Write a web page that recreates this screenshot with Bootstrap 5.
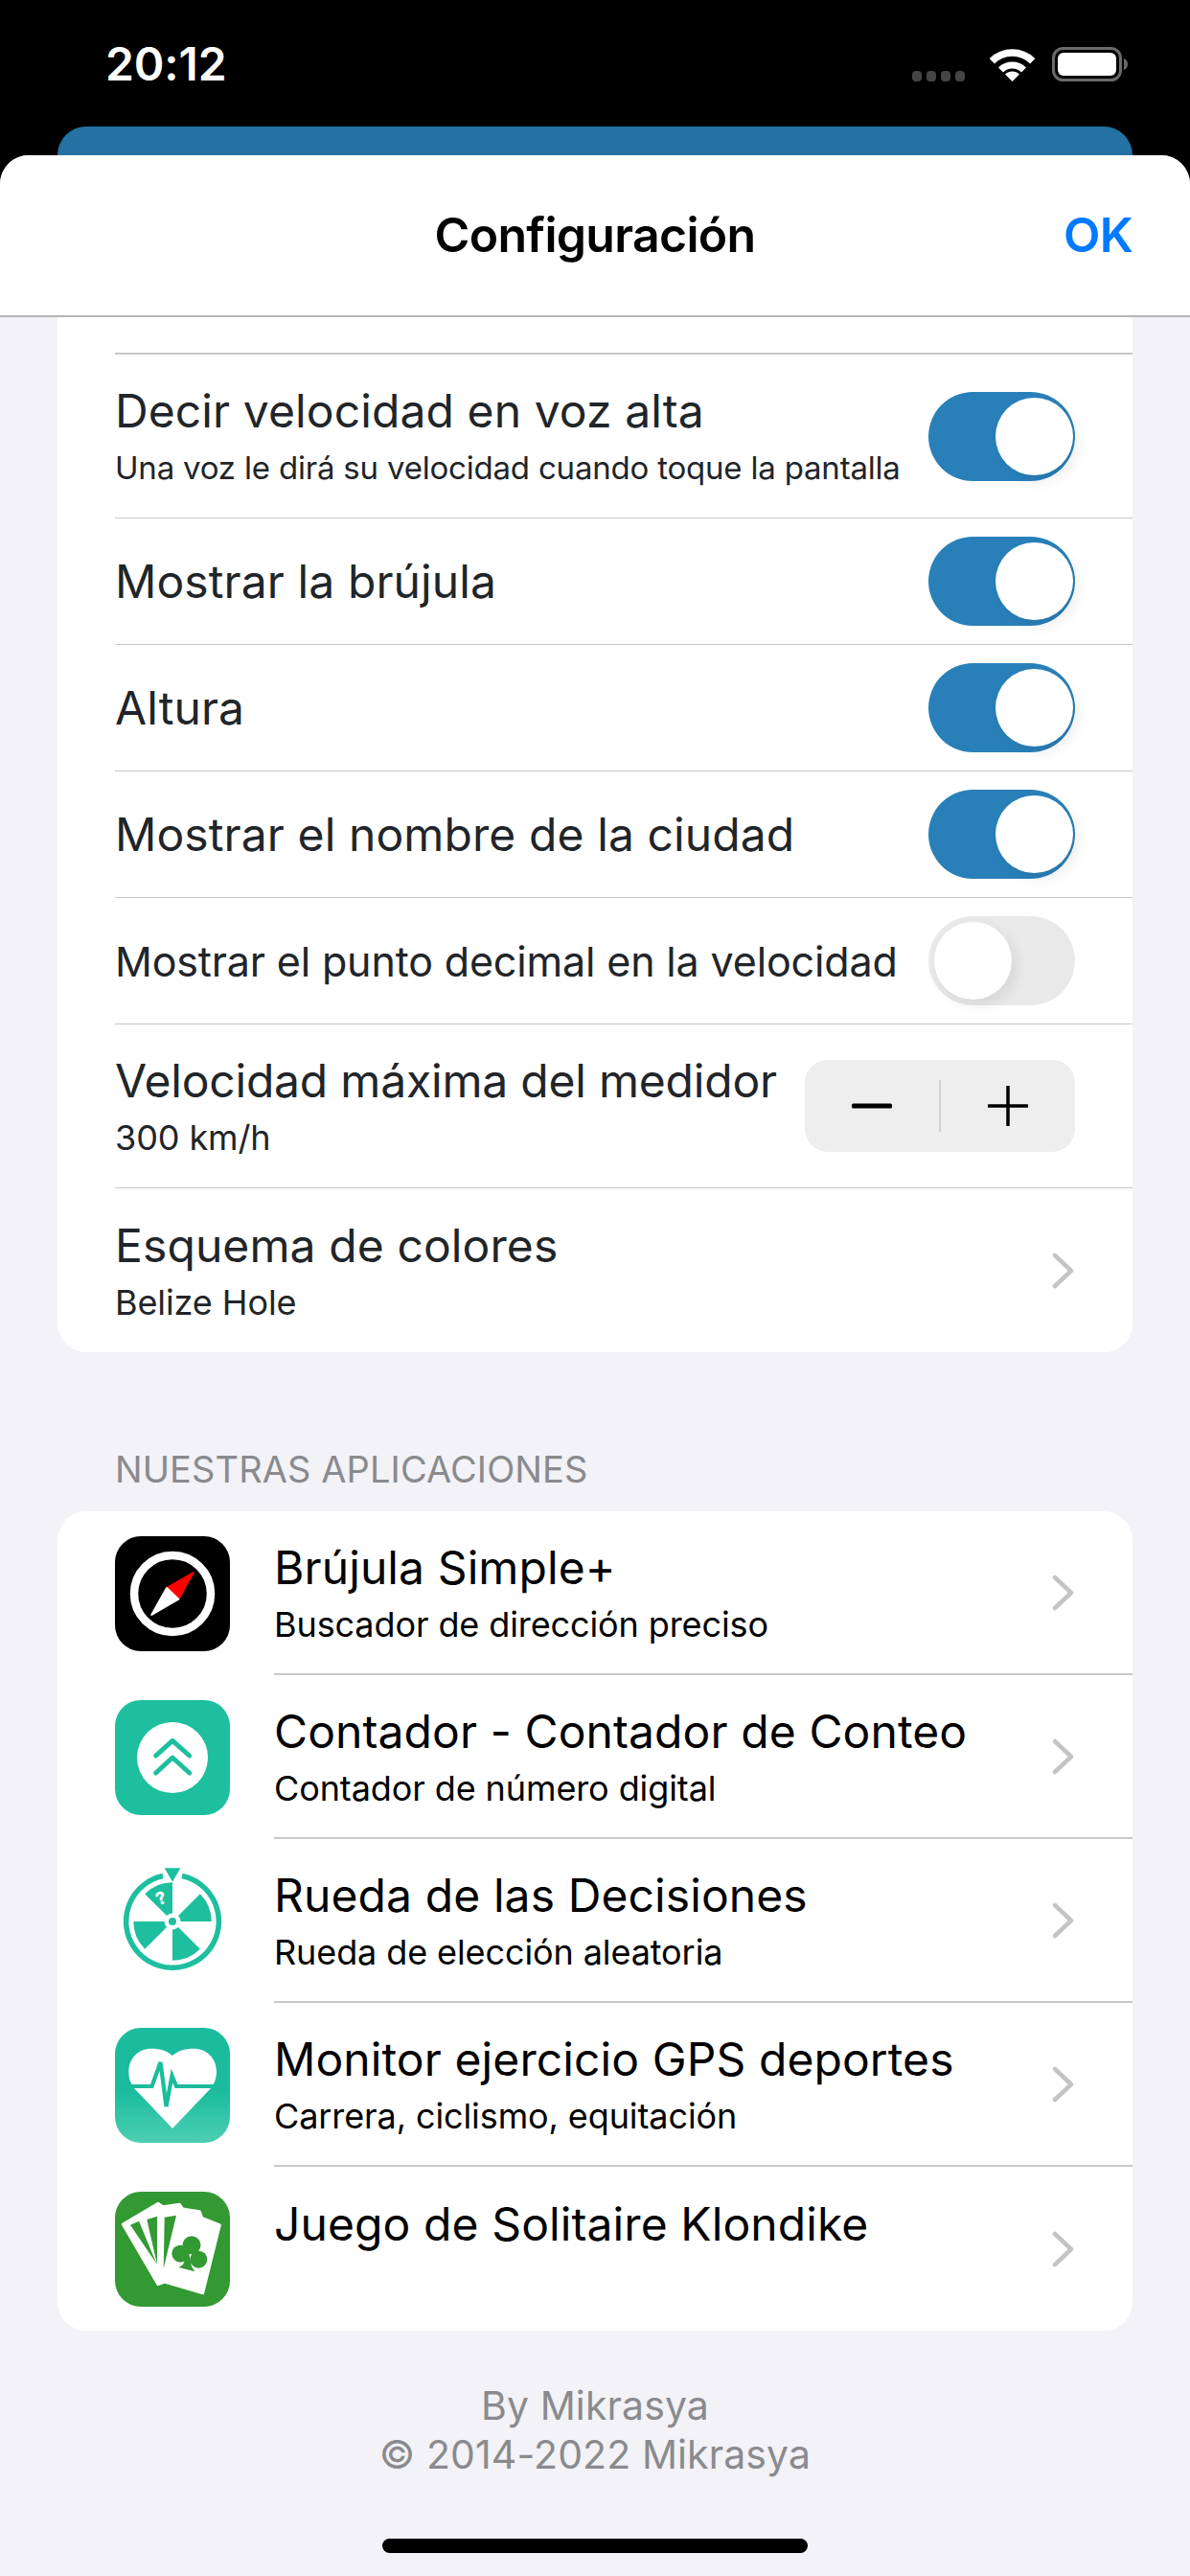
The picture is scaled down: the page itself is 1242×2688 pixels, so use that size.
<!DOCTYPE html>
<html lang="es">
<head>
  <meta charset="UTF-8" />
  <meta name="viewport" content="width=device-width, initial-scale=1.0"/>
  <title>Configuración</title>
  <link href="https://cdn.jsdelivr.net/npm/bootstrap@5.3.0/dist/css/bootstrap.min.css" rel="stylesheet">
  <style>
    html, body { width: 1242px; height: 2688px; margin: 0; overflow: hidden; background: #000; }
    body { font-family: Inter, "Liberation Sans", sans-serif; color: #000; }

    .status-row { height: 132px; padding: 38px 64px 0 110px; color: #fff; }
    .status-time { font-size: 48px; font-weight: 600; line-height: 58px; letter-spacing: -0.1px; }
    .cell-dots { gap: 5px; margin: 36px 26px 0 0; }
    .cell-dot { width: 10px; height: 11px; border-radius: 4px; background: #454545; }
    .wifi-icon { margin: 12px 18px 0 0; }
    .batt-icon { margin-top: 11px; }
    .behind-sheet { height: 30px; margin: 0 60px; background: #2471a3; border-radius: 30px 30px 0 0; }

    .sheet { height: 2526px; background: #f2f2f7; border-radius: 30px 30px 0 0; overflow: hidden; }
    .sheet-head { height: 169px; padding: 0 60px 2px; background: #fff; border-bottom: 2px solid #b5b5b7; }
    .sheet-side { width: 72px; }
    .sheet-title { font-size: 50px; font-weight: 600; letter-spacing: -0.7px; line-height: 60px; }
    .sheet-ok { width: 72px; color: #007aff; font-size: 50px; font-weight: 600; line-height: 60px; letter-spacing: -0.7px; text-align: right; white-space: nowrap; }

    .group-box { margin: 0 60px; background: #fff; overflow: hidden; }
    .group-top { border-radius: 0 0 30px 30px; }
    .group-apps { border-radius: 30px; }
    .clipped-row { height: 39px; margin-left: 60px; border-bottom: 2px solid #c8c8ca; }

    .set-row { margin-left: 60px; padding: 0 60px 0 0; border: 0; border-bottom: 2px solid #c8c8ca; border-radius: 0; }
    .set-row:last-child { border-bottom: 0; }
    .row-s { height: 132px; }
    .row-l { height: 171px; }
    .row-title { font-size: 48px; line-height: 58px; letter-spacing: 0.1px; white-space: nowrap; }
    .row-title.tight { letter-spacing: -0.2px; }
    .row-title-sm { font-size: 43px; line-height: 52px; letter-spacing: -0.15px; white-space: nowrap; }
    .row-sub { font-size: 36px; line-height: 44px; margin-top: 8px; letter-spacing: -0.1px; white-space: nowrap; }
    .row-sub.fit { font-size: 33px; letter-spacing: -0.2px; }
    .row-title-top { margin-bottom: 52px; }

    .toggle-track { width: 153px; height: 93px; border-radius: 47px; flex: none; }
    .toggle-track.on { background: #2980b9; justify-content: flex-end; padding-right: 2px; }
    .toggle-track.off { background: #e9e9ea; justify-content: flex-start; padding-left: 6px; }
    .toggle-knob { width: 81px; height: 81px; border-radius: 50%; background: #fff; box-shadow: 5px 6px 14px rgba(0,0,0,.08); }

    .stepper-box { width: 282px; height: 96px; background: #eeeeef; border-radius: 24px; flex: none; }
    .stepper-half { width: 141px; height: 96px; }
    .stepper-line { width: 2px; height: 54px; background: #d2d2d4; flex: none; }
    .chevron { width: 24px; height: 38px; flex: none; }

    .section-label { margin: 99px 0 0 120px; color: #8a8a8e; font-size: 38px; line-height: 46px; height: 67px; letter-spacing: 0.1px; }
    .app-row { height: 171px; padding-left: 60px; }
    .app-icon { width: 120px; height: 120px; flex: none; }
    .app-body { margin-left: 46px; height: 171px; padding: 0 60px 0 0; border-bottom: 2px solid #c8c8ca; }
    .app-row:last-child .app-body { border-bottom: 0; }

    .foot-text { margin-top: 53px; color: #8a8a8e; font-size: 41px; line-height: 51px; letter-spacing: 0.1px; }
    .home-bar { width: 444px; height: 15px; background: #000; border-radius: 8px; position: absolute; left: 399px; top: 2649px; }
  </style>
</head>
<body>
  <div class="status-row d-flex justify-content-between">
    <div class="status-time">20:12</div>
    <div class="d-flex align-items-start">
      <div class="cell-dots d-flex">
        <span class="cell-dot"></span><span class="cell-dot"></span><span class="cell-dot"></span><span class="cell-dot"></span>
      </div>
      <svg class="wifi-icon" width="47" height="36" viewBox="0 0 47 36">
        <path d="M2.3 13.8A30 30 0 0 1 44.7 13.8" fill="none" stroke="#fff" stroke-width="7.5"/>
        <path d="M11.5 23A17 17 0 0 1 35.5 23" fill="none" stroke="#fff" stroke-width="7"/>
        <path d="M23.5 35L16 27.5A10.6 10.6 0 0 1 31 27.5Z" fill="#fff"/>
      </svg>
      <svg class="batt-icon" width="80" height="36" viewBox="0 0 80 36">
        <rect x="1.5" y="1.5" width="70" height="33" rx="10" fill="none" stroke="#6a6a6a" stroke-width="3"/>
        <rect x="6" y="6" width="61" height="24" rx="6" fill="#fff"/>
        <path d="M75 12C78 13 79 15.500 79 18S78 23 75 24Z" fill="#6a6a6a"/>
      </svg>
    </div>
  </div>
  <div class="behind-sheet"></div>

  <div class="sheet">
    <div class="sheet-head d-flex align-items-center justify-content-between">
      <div class="sheet-side"></div>
      <div class="sheet-title">Configuración</div>
      <div class="sheet-ok">OK</div>
    </div>

    <div class="group-box group-top">
      <div class="clipped-row"></div>
      <ul class="list-group list-group-flush">
        <li class="list-group-item set-row row-l d-flex align-items-center justify-content-between">
          <div><div class="row-title">Decir velocidad en voz alta</div><div class="row-sub fit">Una voz le dirá su velocidad cuando toque la pantalla</div></div>
          <span class="toggle-track on d-flex align-items-center"><span class="toggle-knob"></span></span>
        </li>
        <li class="list-group-item set-row row-s d-flex align-items-center justify-content-between">
          <div class="row-title">Mostrar la brújula</div>
          <span class="toggle-track on d-flex align-items-center"><span class="toggle-knob"></span></span>
        </li>
        <li class="list-group-item set-row row-s d-flex align-items-center justify-content-between">
          <div class="row-title">Altura</div>
          <span class="toggle-track on d-flex align-items-center"><span class="toggle-knob"></span></span>
        </li>
        <li class="list-group-item set-row row-s d-flex align-items-center justify-content-between">
          <div class="row-title">Mostrar el nombre de la ciudad</div>
          <span class="toggle-track on d-flex align-items-center"><span class="toggle-knob"></span></span>
        </li>
        <li class="list-group-item set-row row-s d-flex align-items-center justify-content-between">
          <div class="row-title-sm">Mostrar el punto decimal en la velocidad</div>
          <span class="toggle-track off d-flex align-items-center"><span class="toggle-knob"></span></span>
        </li>
        <li class="list-group-item set-row row-l d-flex align-items-center justify-content-between">
          <div><div class="row-title tight">Velocidad máxima del medidor</div><div class="row-sub">300 km/h</div></div>
          <div class="stepper-box d-flex align-items-center">
            <div class="stepper-half d-flex align-items-center justify-content-center">
              <svg width="42" height="6" viewBox="0 0 42 6"><rect width="42" height="5" y="0.500" rx="1.500" fill="#000"/></svg>
            </div>
            <span class="stepper-line"></span>
            <div class="stepper-half d-flex align-items-center justify-content-center">
              <svg width="42" height="42" viewBox="0 0 42 42"><path d="M21 1V41M1 21H41" stroke="#000" stroke-width="3.500" stroke-linecap="round"/></svg>
            </div>
          </div>
        </li>
        <li class="list-group-item set-row row-l d-flex align-items-center justify-content-between">
          <div><div class="row-title">Esquema de colores</div><div class="row-sub">Belize Hole</div></div>
          <svg class="chevron" viewBox="0 0 24 38"><path d="M3 3L20 19L3 35" fill="none" stroke="#c4c4c7" stroke-width="4.500" stroke-linecap="round" stroke-linejoin="round"/></svg>
        </li>
      </ul>
    </div>

    <div class="section-label">NUESTRAS APLICACIONES</div>

    <div class="group-box group-apps">
      <div class="app-row d-flex align-items-center">
        <svg class="app-icon" viewBox="0 0 120 120">
          <rect width="120" height="120" rx="27" fill="#000"/>
          <circle cx="60" cy="60" r="40" fill="none" stroke="#fff" stroke-width="8.500"/>
          <path d="M81.700 38L54 54L66.300 65.700Z" fill="#f00" stroke="#f00" stroke-width="2" stroke-linejoin="round"/>
          <path d="M38.300 82L54 54L66.300 65.700Z" fill="#fff" stroke="#fff" stroke-width="2" stroke-linejoin="round"/>
        </svg>
        <div class="app-body flex-grow-1 d-flex align-items-center justify-content-between">
          <div><div class="row-title">Brújula Simple+</div><div class="row-sub">Buscador de dirección preciso</div></div>
          <svg class="chevron" viewBox="0 0 24 38"><path d="M3 3L20 19L3 35" fill="none" stroke="#c4c4c7" stroke-width="4.500" stroke-linecap="round" stroke-linejoin="round"/></svg>
        </div>
      </div>
      <div class="app-row d-flex align-items-center">
        <svg class="app-icon" viewBox="0 0 120 120">
          <rect width="120" height="120" rx="27" fill="#1dbf9e"/>
          <circle cx="60" cy="60" r="37" fill="#fff"/>
          <path d="M42.700 58L60 42.300L77.700 58M42.700 76L60 60L77.700 76" fill="none" stroke="#1dbf9e" stroke-width="5" stroke-linecap="round" stroke-linejoin="round"/>
        </svg>
        <div class="app-body flex-grow-1 d-flex align-items-center justify-content-between">
          <div><div class="row-title">Contador - Contador de Conteo</div><div class="row-sub">Contador de número digital</div></div>
          <svg class="chevron" viewBox="0 0 24 38"><path d="M3 3L20 19L3 35" fill="none" stroke="#c4c4c7" stroke-width="4.500" stroke-linecap="round" stroke-linejoin="round"/></svg>
        </div>
      </div>
      <div class="app-row d-flex align-items-center">
        <svg class="app-icon" viewBox="0 0 120 120">
          <path d="M70 12.500A48.400 48.400 0 1 1 50 12.500" fill="none" stroke="#1dbf9e" stroke-width="5.500"/>
          <path d="M51.700 4.300H68.300L60 18.700Z" fill="#1dbf9e"/>
          <path d="M60 60L88.800 31.200A40.700 40.700 0 0 1 100.700 60ZM60 60V100.700A40.700 40.700 0 0 0 88.800 88.800ZM60 60H19.300A40.700 40.700 0 0 0 31.200 88.800ZM60 60V19.300A40.700 40.700 0 0 0 31.200 31.200Z" fill="#1dbf9e"/>
          <circle cx="60" cy="60" r="8.500" fill="#fff"/>
          <circle cx="60" cy="60" r="4" fill="#1dbf9e"/>
          <text x="48" y="42" font-family="Inter, sans-serif" font-size="18" font-weight="800" fill="#fff" text-anchor="middle" transform="rotate(-22 48 36)">?</text>
        </svg>
        <div class="app-body flex-grow-1 d-flex align-items-center justify-content-between">
          <div><div class="row-title">Rueda de las Decisiones</div><div class="row-sub">Rueda de elección aleatoria</div></div>
          <svg class="chevron" viewBox="0 0 24 38"><path d="M3 3L20 19L3 35" fill="none" stroke="#c4c4c7" stroke-width="4.500" stroke-linecap="round" stroke-linejoin="round"/></svg>
        </div>
      </div>
      <div class="app-row d-flex align-items-center">
        <svg class="app-icon" viewBox="0 0 120 120">
          <defs><linearGradient id="heartBg" x1="0" y1="0" x2="0" y2="1"><stop offset="0.550" stop-color="#1abc9c"/><stop offset="1" stop-color="#4dcfb3"/></linearGradient></defs>
          <rect width="120" height="120" rx="27" fill="url(#heartBg)"/>
          <path d="M60 29C66 24 72 21.700 82 21.700C96 21.700 106 32 106 46C106 52 104 57 101 62L60 105L20 63C16 58 14.300 52 14.300 46C14.300 32 24 21.700 38 21.700C48 21.700 54 24 60 29Z" fill="#fff"/>
          <path d="M10 61H38.500L47.500 36L53.500 82L59.500 50L64 61H110" fill="none" stroke="#1abc9c" stroke-width="4.200"/>
        </svg>
        <div class="app-body flex-grow-1 d-flex align-items-center justify-content-between">
          <div><div class="row-title">Monitor ejercicio GPS deportes</div><div class="row-sub">Carrera, ciclismo, equitación</div></div>
          <svg class="chevron" viewBox="0 0 24 38"><path d="M3 3L20 19L3 35" fill="none" stroke="#c4c4c7" stroke-width="4.500" stroke-linecap="round" stroke-linejoin="round"/></svg>
        </div>
      </div>
      <div class="app-row d-flex align-items-center">
        <svg class="app-icon" viewBox="0 0 120 120">
          <rect width="120" height="120" rx="27" fill="#339933"/>
          <path d="M8.300 34L45 12.300L50 15.700L67.300 13.300L70.700 18L88.300 20.700L90.700 27.300L109.300 35L91.700 105.700L51.700 94L45 96.700Z" fill="#fff" stroke="#fff" stroke-width="3" stroke-linejoin="round"/>
          <path d="M16 34.700L25 30.700L43.300 75ZM33.300 29L44 25.700V76ZM51.700 26.700L64 24.700L50.700 80Z" fill="#339933"/>
          <g fill="#339933">
            <circle cx="80" cy="55.700" r="9.500"/><circle cx="68.300" cy="64.700" r="9"/><circle cx="87.300" cy="70.700" r="9"/>
            <path d="M76.700 62L71 76L66.700 79L83.300 83.300L80 78Z"/>
          </g>
        </svg>
        <div class="app-body flex-grow-1 d-flex justify-content-between align-items-center">
          <div class="row-title row-title-top">Juego de Solitaire Klondike</div>
          <svg class="chevron" viewBox="0 0 24 38"><path d="M3 3L20 19L3 35" fill="none" stroke="#c4c4c7" stroke-width="4.500" stroke-linecap="round" stroke-linejoin="round"/></svg>
        </div>
      </div>
    </div>

    <div class="foot-text text-center">By Mikrasya<br>© 2014-2022 Mikrasya</div>
  </div>
  <div class="home-bar"></div>
</body>
</html>
